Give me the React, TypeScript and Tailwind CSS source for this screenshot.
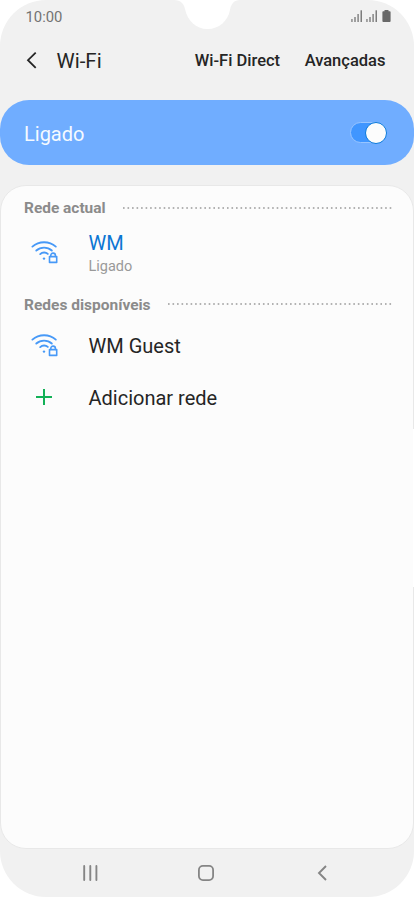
import React from "react";

function Signal() {
  return (
    <svg className="block h-3 w-3" viewBox="0 0 12 12" fill="#7d7d7d">
      <rect x="0.3" y="9" width="1.3" height="3" />
      <rect x="3.3" y="7" width="1.4" height="5" />
      <rect x="6.4" y="4" width="1.4" height="8" />
      <rect x="9.5" y="0.3" width="1.5" height="11.7" />
    </svg>
  );
}

function WifiLock() {
  return (
    <svg className="block h-6 w-7" viewBox="0 0 28 24" fill="none" stroke="#4799f7" strokeWidth="1.9" strokeLinecap="round">
      <path d="M1.4 6.6C8 0.7 18.2 0.7 24.8 6.6" />
      <path d="M5.3 10.5C9.6 6.6 16.6 6.6 20.8 10.5" />
      <path d="M9.2 14.1C11.4 12 14.8 12 16.8 13.9" />
      <circle cx="13" cy="18.6" r="1.2" fill="#4799f7" stroke="none" />
      <rect x="18.5" y="16.6" width="7.2" height="5.8" strokeWidth="1.6" strokeLinejoin="round" />
      <path d="M19.8 16.4v-1a2.3 2.3 0 0 1 4.6 0v1" strokeWidth="1.6" />
    </svg>
  );
}

function Dots({ width }: { width: number }) {
  return (
    <svg className="block h-[2px]" width={width} viewBox={`0 0 ${width} 2`}>
      <line x1="0" y1="1" x2={width} y2="1" stroke="#999999" strokeWidth="1.6" strokeDasharray="1.6 2.92" />
    </svg>
  );
}

export default function App() {
  return (
    <div className="h-[897px] w-[414px] overflow-hidden bg-white font-[Roboto,sans-serif]">
      <div className="relative flex h-[897px] w-[414px] flex-col overflow-hidden rounded-[46px] bg-[#f1f1f1]">
        <svg className="absolute left-[174px] top-0 h-[30px] w-[66px]" viewBox="0 0 66 30" fill="#ffffff">
          <path d="M0 0C7 0 10 4 11 9C13.5 21 22 29 33.5 29C45 29 54 21 56 10C57 4 60 0 66 0Z" />
        </svg>
        <header className="flex h-[34px] shrink-0 items-center pl-[25.5px] pr-[23px]">
          <span className="text-[14.8px] leading-5 text-[#737373]">10:00</span>
          <div className="ml-auto mt-[-2px] flex h-3 items-center gap-[3px]">
            <Signal />
            <Signal />
            <svg className="ml-[1px] block h-3 w-[9px]" viewBox="0 0 9 12" fill="#696969">
              <path d="M2.5 0h4v1.3h1.3q.8 0 .8.8v9q0 .9-.9.9H1.3q-.9 0-.9-.9v-9q0-.8.8-.8h1.3z" />
            </svg>
          </div>
        </header>
        <nav className="flex h-[66px] shrink-0 items-center pb-[13px] pl-[25px] pr-[28.5px] text-[#252525]">
          <svg className="mt-[-1px] block h-[18px] w-3" viewBox="0 0 12 18" fill="none" stroke="#252525" strokeWidth="1.8">
            <path d="M10.7 1.6 3 9.2l7.7 7.6" />
          </svg>
          <h1 className="ml-[19.5px] whitespace-nowrap text-[20.5px] leading-6">Wi-Fi</h1>
          <span className="ml-auto whitespace-nowrap text-[16.5px] font-medium leading-6">Wi-Fi Direct</span>
          <span className="ml-[24.5px] whitespace-nowrap text-[16.5px] font-medium leading-6">Avançadas</span>
        </nav>
        <section className="flex h-[65px] shrink-0 items-center justify-between rounded-[29px] bg-[#70adff] pl-6 pr-[27px]">
          <span className="mt-[2px] text-[20px] leading-6 text-[#f5faff]">Ligado</span>
          <span className="flex h-[21px] w-[37px] items-center justify-end rounded-full border border-[#98c5ff] bg-[#4096ff]">
            <span className="-mr-px h-[22px] w-[22px] shrink-0 rounded-full border border-[#0879dc] bg-[#fcfcfc]" />
          </span>
        </section>
        <main className="mt-5 h-[664px] shrink-0 rounded-[26px] border border-[#e8e8e8] bg-[#fcfcfc] pl-[23px]">
          <div className="flex h-[43px] items-center">
            <h2 className="w-[98.5px] whitespace-nowrap pt-px text-[15.45px] font-bold leading-5 text-[#8b8b8b]">Rede actual</h2>
            <Dots width={270.5} />
          </div>
          <div className="flex h-[52px] items-center">
            <div className="ml-[7px] mt-[-7px] w-[57.5px]"><WifiLock /></div>
            <div className="mt-[-2px]">
              <p className="text-[20px] leading-6 text-[#0b76d3]">WM</p>
              <p className="text-[14.5px] leading-[23px] text-[#999999]">Ligado</p>
            </div>
          </div>
          <div className="flex h-[46px] items-center">
            <h2 className="w-[144px] whitespace-nowrap pt-[2px] text-[15.5px] font-bold leading-5 text-[#8b8b8b]">Redes disponíveis</h2>
            <Dots width={225} />
          </div>
          <div className="flex h-[37px] items-center">
            <div className="ml-[7px] mt-[-2px] w-[57.5px]"><WifiLock /></div>
            <p className="text-[20px] leading-6 text-[#252525]">WM Guest</p>
          </div>
          <div className="flex h-[67px] items-center">
            <svg className="ml-[12px] mr-[36.5px] mt-[-1px] block h-4 w-4" viewBox="0 0 16 16" stroke="#13b157" strokeWidth="2">
              <path d="M0 8h16M8 0v16" />
            </svg>
            <p className="text-[20px] leading-6 text-[#252525]">Adicionar rede</p>
          </div>
        </main>
        <footer className="flex h-[48px] shrink-0 items-center text-[#858585]">
          <svg className="ml-[82px] block h-4 w-4" viewBox="0 0 16 16" stroke="currentColor" strokeWidth="1.9" strokeLinecap="round">
            <path d="M2.2 1v14M8.3 1v14M14.4 1v14" />
          </svg>
          <svg className="ml-[100px] block h-4 w-4" viewBox="0 0 16 16" fill="none" stroke="currentColor" strokeWidth="1.8">
            <rect x="0.9" y="0.9" width="14.2" height="14.2" rx="4" />
          </svg>
          <svg className="ml-[103px] block h-4 w-[10px]" viewBox="0 0 10 16" fill="none" stroke="currentColor" strokeWidth="1.9">
            <path d="M9 1 2 8l7 7" />
          </svg>
        </footer>
        <div className="absolute right-0 top-[429px] h-[158px] w-px bg-white" />
      </div>
    </div>
  );
}
